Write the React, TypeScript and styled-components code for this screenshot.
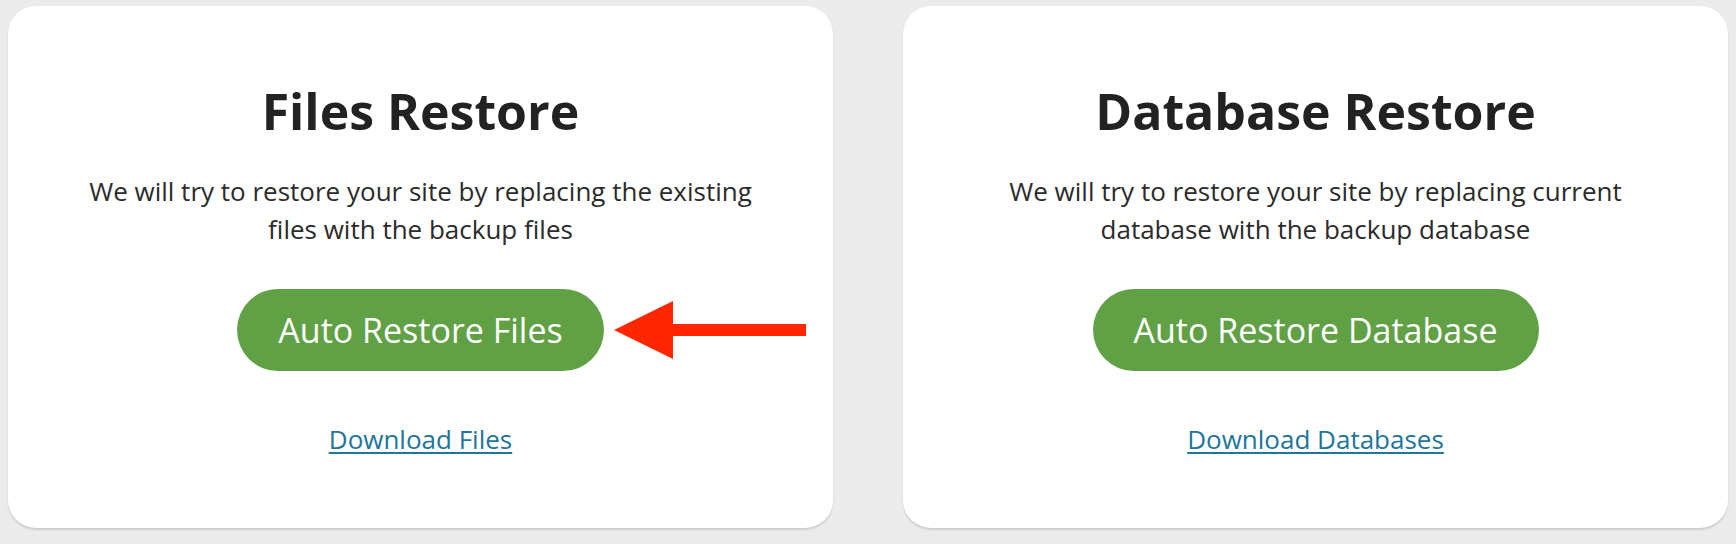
import React from "react";
import styled, { createGlobalStyle } from "styled-components";

const GlobalStyle = createGlobalStyle`
  html, body {
    margin: 0;
    padding: 0;
    background: #ebebeb;
  }
  body {
    font-family: "Open Sans", "Noto Sans", sans-serif;
  }
`;

const Page = styled.main`
  display: flex;
  gap: 70px;
  padding: 6px 8px 0 8px;
  height: 544px;
  box-sizing: border-box;
`;

const Card = styled.section`
  flex: 1;
  height: 522px;
  background: #ffffff;
  border-radius: 28px;
  box-shadow: 0 2px 2px rgba(0, 0, 0, 0.13);
  display: flex;
  flex-direction: column;
  align-items: center;
  box-sizing: border-box;
  padding-top: 75px;
`;

const Title = styled.h2`
  margin: 0;
  font-size: 50px;
  line-height: 60px;
  font-weight: 700;
  color: #222222;
  text-align: center;
`;

const Description = styled.p`
  margin: 31px 0 0 0;
  max-width: 690px;
  font-size: 26px;
  line-height: 38px;
  color: #2b2b2b;
  text-align: center;
`;

const ButtonWrap = styled.div`
  position: relative;
  margin-top: 41px;
`;

const ActionButton = styled.button`
  display: flex;
  align-items: center;
  justify-content: center;
  height: 82px;
  padding: 0 41px;
  border: none;
  border-radius: 41px;
  background: #61a146;
  color: #ffffff;
  font-family: "Open Sans", "Noto Sans", sans-serif;
  font-size: 34px;
  font-weight: 400;
  cursor: pointer;
`;

const Arrow = styled.svg`
  position: absolute;
  left: calc(100% + 10px);
  top: 12px;
  width: 192px;
  height: 58px;
`;

const DownloadLink = styled.a`
  margin-top: 51px;
  font-size: 26px;
  line-height: 34px;
  color: #21759b;
  text-decoration: underline;
  text-underline-offset: 3px;
  text-decoration-thickness: 2px;
  cursor: pointer;
`;

type RestoreCardProps = {
  title: string;
  description: string;
  action: string;
  link: string;
  pointer?: boolean;
};

function RestoreCard({ title, description, action, link, pointer }: RestoreCardProps) {
  return (
    <Card>
      <Title>{title}</Title>
      <Description>{description}</Description>
      <ButtonWrap>
        <ActionButton>{action}</ActionButton>
        {pointer && (
          <Arrow viewBox="0 0 192 58" aria-hidden="true">
            <polygon points="0,29 59,0 59,23 192,23 192,35 59,35 59,58" fill="#ff2600" />
          </Arrow>
        )}
      </ButtonWrap>
      <DownloadLink>{link}</DownloadLink>
    </Card>
  );
}

export default function App() {
  return (
    <>
      <GlobalStyle />
      <Page>
        <RestoreCard
          title="Files Restore"
          description="We will try to restore your site by replacing the existing files with the backup files"
          action="Auto Restore Files"
          link="Download Files"
          pointer
        />
        <RestoreCard
          title="Database Restore"
          description="We will try to restore your site by replacing current database with the backup database"
          action="Auto Restore Database"
          link="Download Databases"
        />
      </Page>
    </>
  );
}
